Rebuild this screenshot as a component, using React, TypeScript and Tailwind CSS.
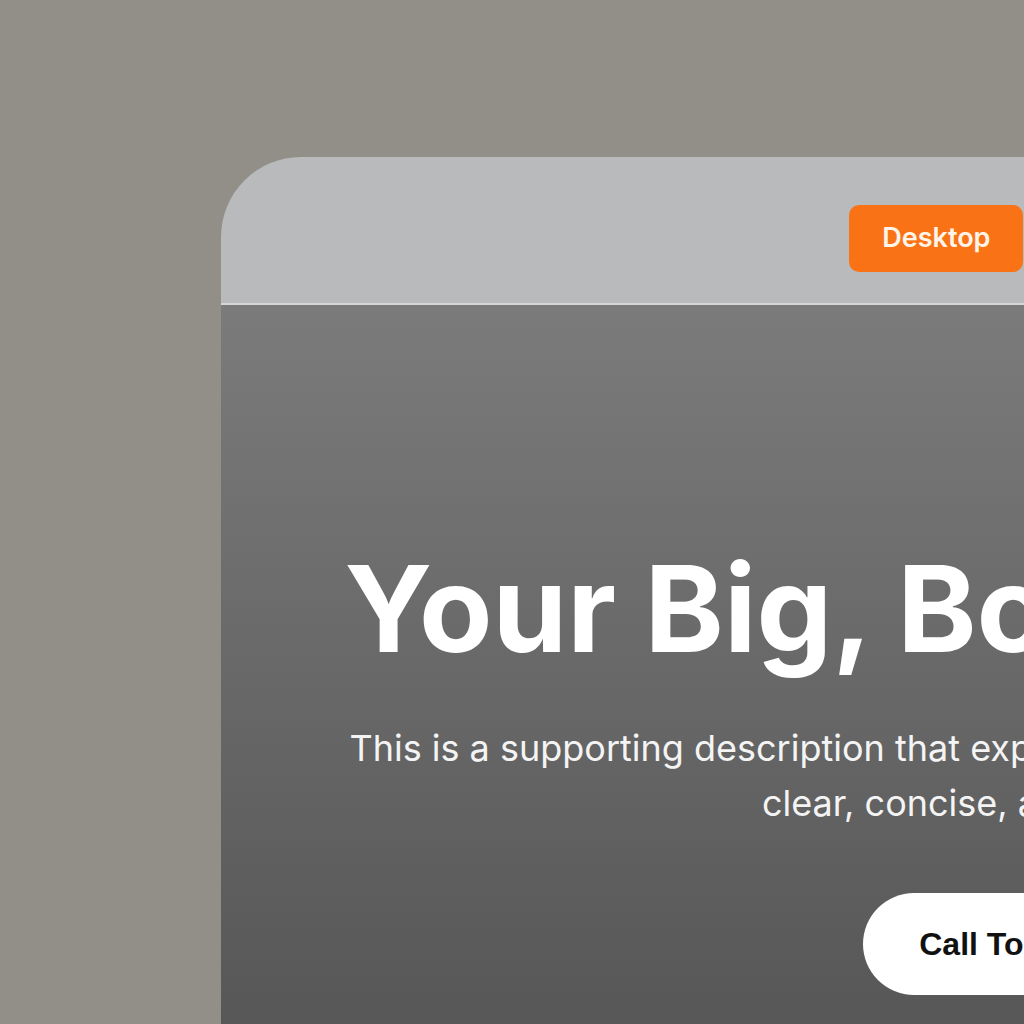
const VIEWS = ["Desktop", "Mobile"];

export default function App() {
  return (
    <div
      className="h-[1024px] w-[1024px] overflow-hidden bg-[#918f88] pl-[221px] pt-[157px]"
      style={{ fontFamily: "Inter, 'Noto Sans', sans-serif" }}
    >
      <div className="w-[1608px] overflow-hidden rounded-tl-[80px]">
        <div className="flex justify-center gap-[23px] border-b-2 border-[#d6d6d6] bg-[#b9babc] pb-[31px] pt-[48px]">
          {VIEWS.map((view, i) => (
            <button
              key={view}
              type="button"
              className={
                i === 0
                  ? "h-[67px] rounded-[10px] bg-[#f97316] px-[33px] text-[27px] font-semibold text-[#fff4ea]"
                  : "h-[67px] rounded-[10px] bg-[#d4d4d6] px-[33px] text-[27px] font-semibold text-[#333]"
              }
            >
              {view}
            </button>
          ))}
        </div>

        <section className="flex h-[760px] flex-col items-center bg-gradient-to-b from-[#7b7b7b] to-[#555555] pt-[244px] text-center">
          <h1 className="whitespace-nowrap text-[120px] font-bold leading-none text-white">
            Your Big, Bold Headline
          </h1>
          <p className="mt-[52px] whitespace-nowrap text-[36px] leading-[55px] text-[#f4f4f4]">
            This is a supporting description that explains an offer and why it matters to you,
            <br />
            clear, concise, and compelling.
          </p>
          <button
            type="button"
            className="mt-[62px] h-[102px] rounded-full bg-white px-[56px] text-[32px] font-bold text-[#111]"
            style={{ fontFamily: "'Liberation Sans', Arial, sans-serif" }}
          >
            Call To Action
          </button>
        </section>
      </div>
    </div>
  );
}
